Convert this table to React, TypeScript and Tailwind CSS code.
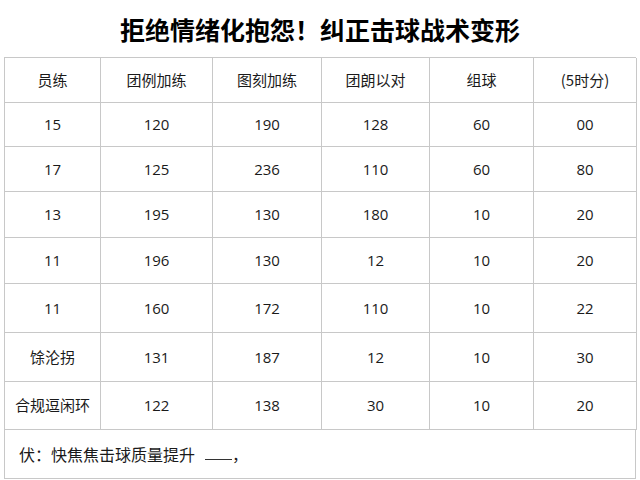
import React from "react";

const headers = ["员练", "团例加练", "图刻加练", "团朗以对", "组球", "(5时分)"];
const rows: { h: string; c: string[] }[] = [
  { h: "h-[44px]", c: ["15", "120", "190", "128", "60", "00"] },
  { h: "h-[45px]", c: ["17", "125", "236", "110", "60", "80"] },
  { h: "h-[46px]", c: ["13", "195", "130", "180", "10", "20"] },
  { h: "h-[46px]", c: ["11", "196", "130", "12", "10", "20"] },
  { h: "h-[49px]", c: ["11", "160", "172", "110", "10", "22"] },
  { h: "h-[49px]", c: ["馀沦拐", "131", "187", "12", "10", "30"] },
  { h: "h-[48px]", c: ["合规逗闲环", "122", "138", "30", "10", "20"] },
];

const cell =
  "flex items-center justify-center border-r border-b border-[#c8c8c8]";

export default function App() {
  return (
    <div className="w-[640px] h-[480px] bg-white overflow-hidden text-[#1a1a1a] font-['Open_Sans','Noto_Sans_CJK_SC',sans-serif]">
      <div className="h-[57px] flex items-center justify-center pt-[2px]">
        <h1 className="text-[25px] font-bold text-black leading-none font-['Noto_Sans_CJK_SC',sans-serif]">
          拒绝情绪化抱怨！纠正击球战术变形
        </h1>
      </div>
      <div className="ml-[4px] w-[632px] border-l border-t border-[#c8c8c8] text-[15px]">
        <div className="grid grid-cols-[96px_112px_109px_108px_104px_103px] h-[45px]">
          {headers.map((t, i) => (
            <div key={i} className={`${cell} font-['Noto_Sans_CJK_SC',sans-serif]`}>
              {t}
            </div>
          ))}
        </div>
        {rows.map((r, ri) => (
          <div key={ri} className={`grid grid-cols-[96px_112px_109px_108px_104px_103px] ${r.h}`}>
            {r.c.map((t, i) => (
              <div
                key={i}
                className={`${cell} ${i === 0 && ri >= 5 ? "font-['Noto_Sans_CJK_SC',sans-serif]" : ""}`}
              >
                {t}
              </div>
            ))}
          </div>
        ))}
        <div className="h-[49px] flex items-center pl-[14px] border-r border-b border-[#c8c8c8] text-[16px] font-['Noto_Sans_CJK_SC',sans-serif]">
          <span>伏：快焦焦击球质量提升</span>
          <span className="ml-[10px] w-[27px] h-[12px] border-b border-[#333]"></span>
          <span>，</span>
        </div>
      </div>
    </div>
  );
}
